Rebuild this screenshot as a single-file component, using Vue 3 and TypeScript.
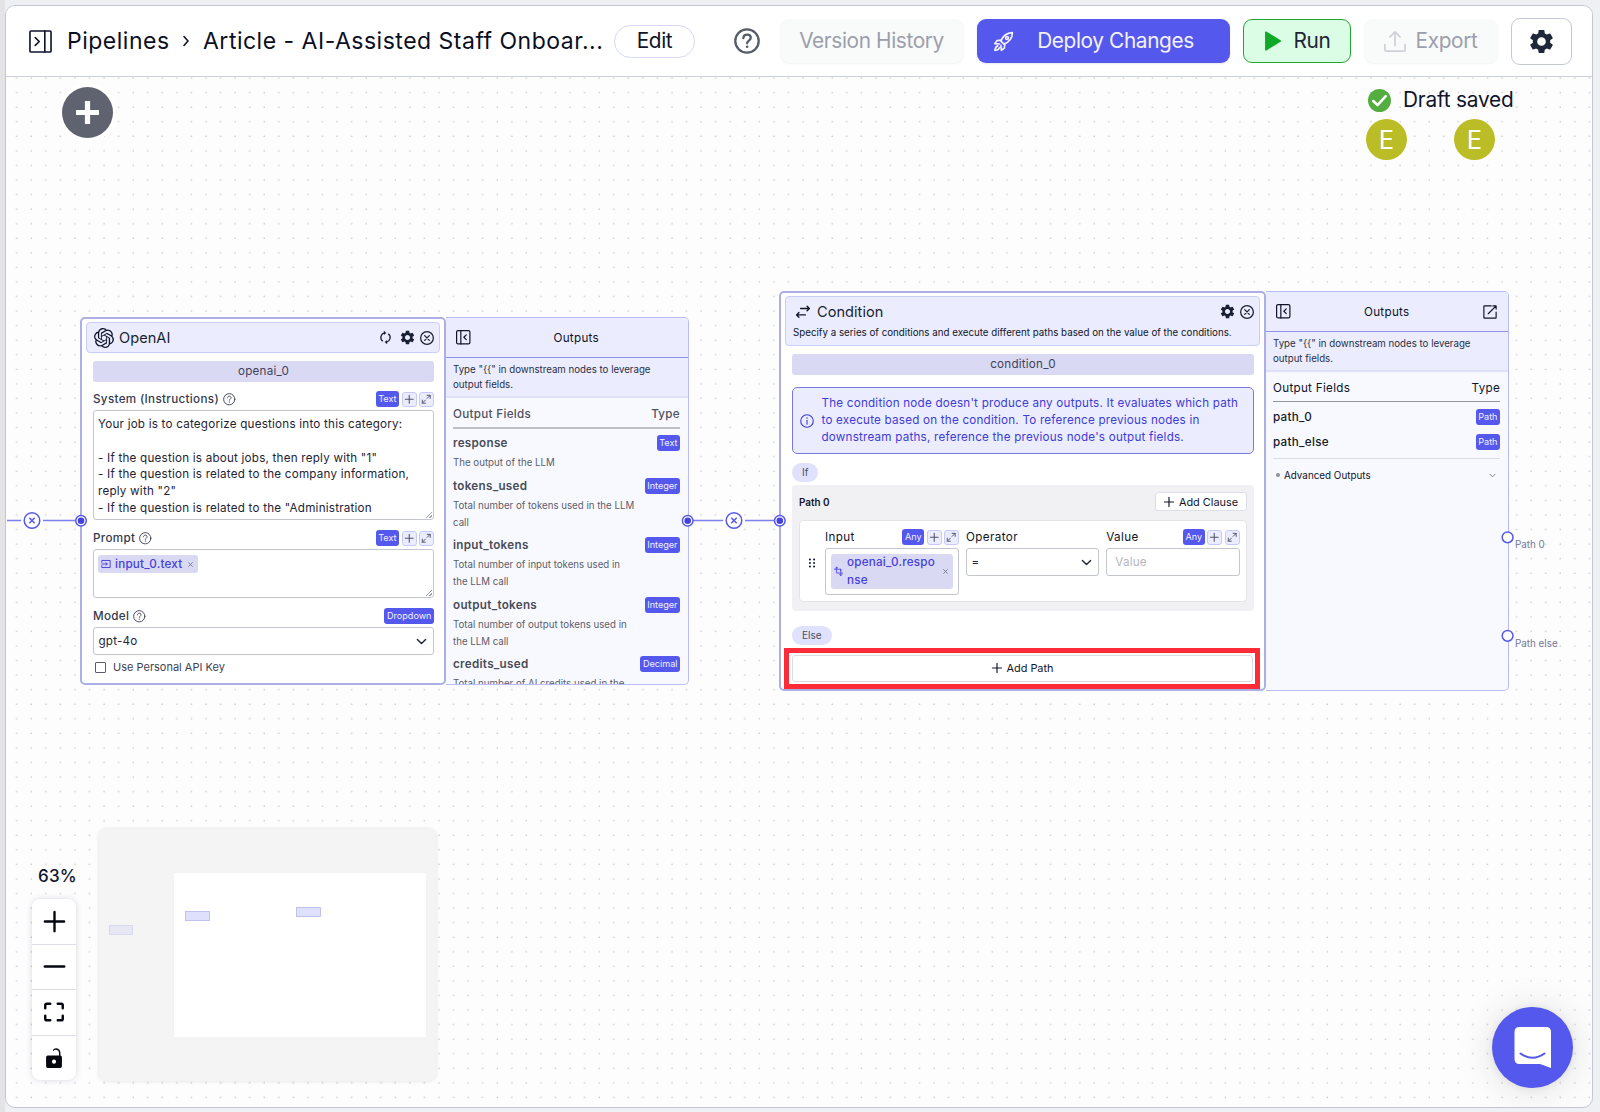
<script setup lang="ts">
import { h } from 'vue'

const gear =
  '<path fill="currentColor" stroke="none" d="M19.14 12.94c.04-.3.06-.61.06-.94 0-.32-.02-.64-.07-.94l2.03-1.58c.18-.14.23-.41.12-.61l-1.92-3.32c-.12-.22-.37-.29-.59-.22l-2.39.96c-.5-.38-1.03-.7-1.62-.94l-.36-2.54c-.04-.24-.24-.41-.48-.41h-3.84c-.24 0-.43.17-.47.41l-.36 2.54c-.59.24-1.13.57-1.62.94l-2.39-.96c-.22-.08-.47 0-.59.22L2.74 8.87c-.12.21-.08.47.12.61l2.03 1.58c-.05.3-.09.63-.09.94s.02.64.07.94l-2.03 1.58c-.18.14-.23.41-.12.61l1.92 3.32c.12.22.37.29.59.22l2.39-.96c.5.38 1.03.7 1.62.94l.36 2.54c.05.24.24.41.48.41h3.84c.24 0 .44-.17.47-.41l.36-2.54c.59-.24 1.13-.56 1.62-.94l2.39.96c.22.08.47 0 .59-.22l1.92-3.32c.12-.22.07-.47-.12-.61l-2.01-1.58zM12 15.6c-1.98 0-3.6-1.62-3.6-3.6s1.62-3.6 3.6-3.6 3.6 1.62 3.6 3.6-1.62 3.6-3.6 3.6z"/>'

const glyphs: Record<string, string> = {
  gear,
  openai:
    '<path fill="currentColor" stroke="none" d="M22.2819 9.8211a5.9847 5.9847 0 0 0-.5157-4.9108 6.0462 6.0462 0 0 0-6.5098-2.9A6.0651 6.0651 0 0 0 4.9807 4.1818a5.9847 5.9847 0 0 0-3.9977 2.9 6.0462 6.0462 0 0 0 .7427 7.0966 5.98 5.98 0 0 0 .511 4.9107 6.051 6.051 0 0 0 6.5146 2.9001A5.9847 5.9847 0 0 0 13.2599 24a6.0557 6.0557 0 0 0 5.7718-4.2058 5.9894 5.9894 0 0 0 3.9977-2.9001 6.0557 6.0557 0 0 0-.7475-7.0729zm-9.022 12.6081a4.4755 4.4755 0 0 1-2.8764-1.0408l.1419-.0804 4.7783-2.7582a.7948.7948 0 0 0 .3927-.6813v-6.7369l2.02 1.1686a.071.071 0 0 1 .038.052v5.5826a4.504 4.504 0 0 1-4.4945 4.4944zm-9.6607-4.1254a4.4708 4.4708 0 0 1-.5346-3.0137l.142.0852 4.783 2.7582a.7712.7712 0 0 0 .7806 0l5.8428-3.3685v2.3324a.0804.0804 0 0 1-.0332.0615L9.74 19.9502a4.4992 4.4992 0 0 1-6.1408-1.6464zM2.3408 7.8956a4.485 4.485 0 0 1 2.3655-1.9728V11.6a.7664.7664 0 0 0 .3879.6765l5.8144 3.3543-2.0201 1.1685a.0757.0757 0 0 1-.071 0l-4.8303-2.7865A4.504 4.504 0 0 1 2.3408 7.872zm16.5963 3.8558L13.1038 8.364 15.1192 7.2a.0757.0757 0 0 1 .071 0l4.8303 2.7913a4.4944 4.4944 0 0 1-.6765 8.1042v-5.6772a.79.79 0 0 0-.407-.667zm2.0107-3.0231l-.142-.0852-4.7735-2.7818a.7759.7759 0 0 0-.7854 0L9.409 9.2297V6.8974a.0662.0662 0 0 1 .0284-.0615l4.8303-2.7866a4.4992 4.4992 0 0 1 6.6802 4.66zM8.3065 12.863l-2.02-1.1638a.0804.0804 0 0 1-.038-.0567V6.0742a4.4992 4.4992 0 0 1 7.3757-3.4537l-.142.0805L8.704 5.459a.7948.7948 0 0 0-.3927.6813zm1.0976-2.3654l2.602-1.4998 2.6069 1.4998v2.9994l-2.5974 1.4997-2.6067-1.4997Z"/>',
  panelOpen: '<rect x="1" y="1" width="22" height="22" rx="1.2"/><path d="M16.5 1v22M6.5 8l4.2 4-4.2 4"/>',
  panelClose: '<rect x="1" y="1" width="22" height="22" rx="2.5"/><path d="M8 1v22M17 8l-4 4 4 4"/>',
  chevronRight: '<path d="M8 3l8 9-8 9"/>',
  chevronDown: '<path d="M3 7.5l9 9 9-9"/>',
  help: '<circle cx="12" cy="12" r="10.8"/><path d="M8.6 9.3c.2-2.1 1.6-3.2 3.5-3.2 2 0 3.4 1.2 3.4 3 0 2.5-3.4 2.6-3.4 5"/><circle cx="12.1" cy="17.3" r="1.2" fill="currentColor" stroke="none"/>',
  rocket:
    '<path d="M9 11.5C11 6 15.500 2.200 22.200 1.800 22 8.500 18 13 12.500 15z"/><circle cx="16" cy="8" r="1.600"/><path d="M9.500 10.500L4.500 11 2 14.500l5.500.4M13.500 14.500l-.5 5L9.500 22l-.4-5.500M5.500 17c-2.500.6-3 2.500-3.300 5.200 2.700-.2 4.600-.8 5.200-3.200"/>',
  play: '<path fill="currentColor" stroke="none" d="M2.500 1.500Q2.500 0 4 .7L21 11Q22.500 12 21 13L4 23.300Q2.500 24 2.500 22.500z"/>',
  upload: '<path d="M12 17V2M6.500 7.500L12 2l5.500 5.500M1 16v5.500q0 1.500 1.500 1.500h19q1.500 0 1.500-1.500V16"/>',
  check: '<circle cx="12" cy="12" r="12" fill="#54ad3f" stroke="none"/><path d="M5.500 12.500l4.500 4.300 8.500-9.300" stroke="#fff"/>',
  refresh:
    '<path d="M10 3.500A8.500 8.500 0 0 0 6.500 18.300M14 20.500A8.500 8.500 0 0 0 17.500 5.700"/><path fill="currentColor" stroke="none" d="M9 -.5l4.500 4L9 7.500zM15 24.500l-4.500-4L15 16.500z"/>',
  close: '<circle cx="12" cy="12" r="10.900"/><path d="M8 8l8 8M16 8l-8 8"/>',
  cross: '<path d="M3 3l18 18M21 3L3 21"/>',
  plus: '<path d="M12 1v22M1 12h22"/>',
  minus: '<path d="M1 12h22"/>',
  expand: '<path d="M3 14v7h7M14 3h7v7M3 21l7-7M21 3l-7 7"/>',
  swap: '<path d="M8 6h15M19 2L23 6 19 10M16 17H1M5 13L1 17 5 21"/>',
  info: '<circle cx="12" cy="12" r="10.800"/><path d="M12 11v6.500"/><circle cx="12" cy="7" r="1.300" fill="currentColor" stroke="none"/>',
  input: '<path d="M2 8V3.500h20v17H2V16M2 12h13M11.500 8.500L15 12l-3.500 3.500"/>',
  crop: '<path d="M7 1v15h16M1 6h5M10 6h8v7M18 16v7M18 6v4M4 3L7 .5 10 3M15 20l3 3 3-3"/>',
  external: '<path d="M14 1.500H2.500q-1 0-1 1v19q0 1 1 1h19q1 0 1-1V12M17 1.500h5.500V7M22 2L9 15"/>',
  drag: '<g fill="currentColor" stroke="none"><circle cx="7" cy="3.500" r="2.400"/><circle cx="17" cy="3.500" r="2.400"/><circle cx="7" cy="12" r="2.400"/><circle cx="17" cy="12" r="2.400"/><circle cx="7" cy="20.500" r="2.400"/><circle cx="17" cy="20.500" r="2.400"/></g>',
  fit: '<path d="M1.500 7.500V4q0-2 2-2H7.500M16.500 2h4q2 0 2 2v3.500M22.500 16.500v3.500q0 2-2 2h-4M7.500 22H3.500q-2 0-2-2v-3.500"/>',
  unlock:
    '<path fill="currentColor" stroke="none" fill-rule="evenodd" d="M4.500 9H18V5.800Q18 2.500 15 2q-2.500-.3-3.500 1.500L10.500 2.500Q12 0 15 .2q4.600.5 4.700 5.600V9q1.800.2 1.800 2v11q0 2-2 2h-15q-2 0-2-2V11q0-2 2-2zM12 13.800a2.500 2.500 0 1 0 .01 0z"/>',
}

const Icon = (props: { name: string; s: number; w?: number }) =>
  h('svg', {
    viewBox: '0 0 24 24',
    width: props.s,
    height: props.s,
    fill: 'none',
    stroke: 'currentColor',
    'stroke-width': props.w ?? 2,
    'stroke-linecap': 'round',
    'stroke-linejoin': 'round',
    class: 'icon',
    innerHTML: glyphs[props.name],
  })
Icon.props = ['name', 's', 'w']

const Tools = (props: { type: string }) =>
  h('span', { class: 'tools' }, [
    h('b', { class: 'badge' }, props.type),
    h('i', { class: 'mini' }, [h(Icon, { name: 'plus', s: 8.5, w: 3 })]),
    h('i', { class: 'mini' }, [h(Icon, { name: 'expand', s: 10.5, w: 2.2 })]),
  ])
Tools.props = ['type']

const note = 'Type "{{" in downstream nodes to leverage output fields.'
const systemText = `Your job is to categorize questions into this category:

- If the question is about jobs, then reply with "1"
- If the question is related to the company information, reply with "2"
- If the question is related to the "Administration`

const fields = [
  { name: 'response', type: 'Text', text: 'The output of the LLM' },
  { name: 'tokens_used', type: 'Integer', text: 'Total number of tokens used in the LLM call' },
  { name: 'input_tokens', type: 'Integer', text: 'Total number of input tokens used in the LLM call' },
  { name: 'output_tokens', type: 'Integer', text: 'Total number of output tokens used in the LLM call' },
  { name: 'credits_used', type: 'Decimal', text: 'Total number of AI credits used in the' },
]
</script>

<template>
  <div class="page">
    <div class="frame">
      <header class="top">
        <Icon class="panel-ic" name="panelOpen" :s="23" :w="1.7" />
        <span class="crumb c1">Pipelines</span>
        <Icon class="crumb-ic" name="chevronRight" :s="12" :w="3.2" />
        <span class="crumb c2">Article - AI-Assisted Staff Onboar...</span>
        <button class="edit">Edit</button>
        <Icon class="help" name="help" :s="26" :w="2.1" />
        <button class="btn off version">Version History</button>
        <button class="btn deploy"><Icon name="rocket" :s="21" :w="1.9" /><span>Deploy Changes</span></button>
        <button class="btn run"><Icon name="play" :s="20" /><span>Run</span></button>
        <button class="btn off export"><Icon name="upload" :s="22" :w="1.9" /><span>Export</span></button>
        <button class="btn cog"><Icon name="gear" :s="29" /></button>
      </header>

      <main class="canvas">
        <svg class="dots" width="1586" height="1030">
          <defs>
            <pattern id="grid" x="9.500" y="14.400" width="14.562" height="14.562" patternUnits="userSpaceOnUse">
              <circle cx="1.200" cy="1.200" r="0.750" fill="#bfc0c9" />
            </pattern>
          </defs>
          <rect width="1586" height="1030" fill="url(#grid)" />
        </svg>

        <button class="add"><Icon name="plus" :s="25" :w="5" /></button>

        <div class="status">
          <div class="saved"><Icon name="check" :s="23" :w="2.6" /><span>Draft saved</span></div>
          <div class="users"><span class="avatar">E</span><span class="avatar">E</span></div>
        </div>

        <section class="node openai">
          <div class="card">
            <div class="head">
              <Icon name="openai" :s="20" /><span class="title">OpenAI</span>
              <span class="acts">
                <Icon name="refresh" :s="13" :w="2.4" /><Icon name="gear" :s="17" /><Icon name="close" :s="14" :w="2.2" />
              </span>
            </div>
            <div class="body">
              <div class="id">openai_0</div>
              <div class="label l1"><span>System (Instructions)</span><Icon name="help" :s="12.500" :w="1.7" /><Tools type="Text" /></div>
              <div class="area a1">{{ systemText }}<i class="grip"></i></div>
              <div class="label l2"><span>Prompt</span><Icon name="help" :s="12.500" :w="1.7" /><Tools type="Text" /></div>
              <div class="area a2">
                <span class="chip"><Icon name="input" :s="10" :w="2.3" /><span class="chip-t">input_0.text</span><Icon class="x" name="cross" :s="5" :w="4.500" /></span>
                <i class="grip"></i>
              </div>
              <div class="label l3"><span>Model</span><Icon name="help" :s="12.500" :w="1.7" /><span class="tools"><b class="badge">Dropdown</b></span></div>
              <div class="select"><span>gpt-4o</span><Icon name="chevronDown" :s="11" :w="3" /></div>
              <div class="tick"><i></i>Use Personal API Key</div>
            </div>
          </div>
          <aside class="outs soft">
            <div class="outs-head"><Icon name="panelClose" :s="14.500" :w="2" /><span>Outputs</span><i class="gap"></i></div>
            <p class="note">{{ note }}</p>
            <div class="list">
              <div class="cols"><span>Output Fields</span><span>Type</span></div>
              <div v-for="f in fields" :key="f.name" class="field">
                <div class="frow"><span>{{ f.name }}</span><b class="badge">{{ f.type }}</b></div>
                <p>{{ f.text }}</p>
              </div>
            </div>
          </aside>
        </section>

        <section class="node condition">
          <div class="card">
            <div class="head tall">
              <div class="hrow">
                <Icon name="swap" :s="14" :w="2.3" /><span class="title">Condition</span>
                <span class="acts"><Icon name="gear" :s="17" /><Icon name="close" :s="14" :w="2.2" /></span>
              </div>
              <p>Specify a series of conditions and execute different paths based on the value of the conditions.</p>
            </div>
            <div class="body">
              <div class="id">condition_0</div>
              <div class="info">
                <Icon name="info" :s="14" :w="1.9" />
                <p>The condition node doesn't produce any outputs. It evaluates which path to execute based on the condition. To reference previous nodes in downstream paths, reference the previous node's output fields.</p>
              </div>
              <span class="pill p-if">If</span>
              <div class="path">
                <div class="path-top"><b>Path 0</b><button class="clause"><Icon name="plus" :s="10" :w="2.800" /><span>Add Clause</span></button></div>
                <div class="clause-box">
                  <Icon class="drag" name="drag" :s="10" />
                  <div class="col">
                    <div class="clabel"><span>Input</span><Tools type="Any" /></div>
                    <div class="cin">
                      <span class="chip wide"><Icon name="crop" :s="9" :w="2.3" /><span class="chip-t">openai_0.respo<br />nse</span><Icon class="x" name="cross" :s="5" :w="4.500" /></span>
                    </div>
                  </div>
                  <div class="col">
                    <div class="clabel"><span>Operator</span></div>
                    <div class="select"><span>=</span><Icon name="chevronDown" :s="11" :w="3" /></div>
                  </div>
                  <div class="col">
                    <div class="clabel"><span>Value</span><Tools type="Any" /></div>
                    <div class="select ph"><span>Value</span></div>
                  </div>
                </div>
              </div>
              <span class="pill p-else">Else</span>
            </div>
            <div class="mark"><button class="addpath"><Icon name="plus" :s="10" :w="2.800" /><span>Add Path</span></button></div>
          </div>
          <aside class="outs">
            <div class="outs-head"><Icon name="panelClose" :s="14.500" :w="2" /><span>Outputs</span><Icon name="external" :s="14" :w="2" /></div>
            <p class="note">{{ note }}</p>
            <div class="list">
              <div class="cols"><span>Output Fields</span><span>Type</span></div>
              <div class="prow"><span>path_0</span><b class="badge">Path</b></div>
              <div class="prow"><span>path_else</span><b class="badge">Path</b></div>
              <div class="adv"><i></i><span>Advanced Outputs</span><Icon name="chevronDown" :s="7" :w="2.800" /></div>
            </div>
          </aside>
          <span class="port-label pl1">Path 0</span>
          <span class="port-label pl2">Path else</span>
        </section>

        <svg class="edges" width="1586" height="1030" fill="#fff" stroke="#5558ea" stroke-width="1.500">
          <path d="M1 443.500H75M682 443.500H774" stroke="#7c80f0" />
          <g v-for="x in [26, 728]" :key="x">
            <circle :cx="x" cy="443.500" r="11" stroke="none" /><circle :cx="x" cy="443.500" r="7.800" />
            <path :d="`M${x - 2.700} 440.800l5.400 5.400m0-5.400l-5.400 5.400`" />
          </g>
          <g v-for="x in [75, 681.700, 773.800]" :key="x">
            <circle :cx="x" cy="443.800" r="5.300" /><circle :cx="x" cy="443.800" r="3.300" fill="#4541dc" stroke="none" />
          </g>
          <circle cx="1501.600" cy="460.300" r="5.400" /><circle cx="1501.600" cy="558.800" r="5.400" />
        </svg>

        <div class="zoom">63%</div>
        <div class="controls">
          <button><Icon name="plus" :s="21" :w="2.700" /></button>
          <button><Icon name="minus" :s="21" :w="3" /></button>
          <button><Icon name="fit" :s="20" :w="2.900" /></button>
          <button><Icon name="unlock" :s="20" /></button>
        </div>
        <div class="minimap">
          <i class="view"></i><i class="mn m1"></i><i class="mn m2"></i><i class="mn m3"></i>
        </div>
        <button class="chat">
          <svg width="37" height="41" viewBox="0 0 37 41">
            <path fill="#fff" d="M5.500 0h26.500q5 0 5 5v36L26 37H5.500q-5 0-5-5V5q0-5 5-5z" />
            <path d="M6.500 26.500q12 8.500 24 0" fill="none" stroke="#5558ea" stroke-width="2" stroke-linecap="round" />
          </svg>
        </button>
      </main>
    </div>
  </div>
</template>

<style>
body {
  background: #eff0f3;
}
.icon {
  flex: none;
  display: block;
  overflow: visible;
}
.tools {
  display: flex;
  gap: 2.500px;
  margin-left: auto;
  align-items: center;
}
.badge {
  height: 16px;
  line-height: 15.500px;
  padding: 0 2.500px;
  border-radius: 3px;
  background: #5558ec;
  color: #f0f0ff;
  font-size: 9.100px;
  font-weight: 400;
  letter-spacing: 0;
}
.mini {
  width: 15px;
  height: 15px;
  box-sizing: border-box;
  border: 1px solid #c6cafa;
  border-radius: 3px;
  background: #ebedfe;
  color: #51556a;
  display: flex;
  align-items: center;
  justify-content: center;
}
</style>

<style scoped>
.page {
  width: 1600px;
  height: 1112px;
  box-sizing: border-box;
  padding: 5px 7px 4px 5px;
  background: linear-gradient(90deg, #e4e4e7 5px, #eff0f3 5px);
  font-family: Inter, 'Liberation Sans', sans-serif;
  color: #10142a;
  overflow: hidden;
}
button {
  font: inherit;
  color: inherit;
  letter-spacing: inherit;
  padding: 0;
  box-sizing: border-box;
}
p {
  margin: 0;
}
.frame {
  height: 1103px;
  box-sizing: border-box;
  border: 1.500px solid #c4c7d2;
  border-radius: 10px;
  background: #fdfdfe;
  overflow: hidden;
}
.top {
  height: 71px;
  box-sizing: border-box;
  border-bottom: 1px solid #ccd0da;
  display: flex;
  align-items: center;
  padding-left: 23px;
  background: #fff;
  font-size: 20.800px;
  letter-spacing: -0.370px;
  white-space: nowrap;
}
.crumb {
  font-size: 23px;
  letter-spacing: 0.500px;
  color: #0b0f1f;
}
.c1 {
  margin-left: 15px;
  width: 102px;
}
.crumb-ic {
  margin-left: 11px;
}
.c2 {
  margin-left: 11px;
  width: 398px;
}
.edit {
  margin-left: 13px;
  width: 81px;
  height: 33px;
  border: 1.500px solid #d5d8fb;
  border-radius: 17px;
  background: #fff;
  padding-bottom: 1px;
}
.help {
  margin-left: 38.500px;
  color: #565b69;
}
.btn {
  height: 44px;
  border-radius: 9px;
  border: 1px solid transparent;
  display: flex;
  align-items: center;
  justify-content: center;
}
.btn span,
.version {
  padding-bottom: 2px;
}
.off {
  background: #f9fafa;
  color: #9b9fac;
  box-shadow: 0 1px 2px rgba(0, 0, 0, 0.05);
}
.version {
  margin-left: 20px;
  width: 184px;
}
.deploy {
  margin-left: 13px;
  width: 253px;
  padding-right: 19px;
  background: #5558ec;
  color: #f2f2ff;
  gap: 23px;
  box-shadow: 0 1px 2px rgba(0, 0, 0, 0.1);
}
.run {
  margin-left: 13px;
  width: 108px;
  background: #dbfce5;
  border-color: #1fa832;
  color: #1d2536;
  gap: 11px;
}
.run svg {
  color: #0da927;
}
.export {
  margin-left: 13px;
  width: 134px;
  gap: 10px;
}
.export svg {
  color: #cfd1d8;
}
.cog {
  margin-left: 13px;
  width: 61px;
  height: 47px;
  background: #fff;
  border: 1.500px solid #c3c7d1;
  color: #1f2839;
}
.canvas {
  position: relative;
  height: 1030px;
}
.dots,
.edges {
  position: absolute;
  left: 0;
  top: 0;
  pointer-events: none;
}
.add {
  position: absolute;
  left: 56px;
  top: 10px;
  width: 51px;
  height: 51px;
  border: 0;
  border-radius: 50%;
  background: #5f636f;
  color: #fff;
  display: flex;
  align-items: center;
  justify-content: center;
  box-shadow: 0 0 0 4px #fff;
}
.add svg {
  stroke-linecap: butt;
}
.status {
  position: absolute;
  left: 1360px;
  top: 11px;
}
.saved {
  display: flex;
  align-items: center;
  height: 24px;
  padding-left: 2px;
  gap: 12px;
  font-size: 20.800px;
  letter-spacing: -0.200px;
}
.saved span {
  padding-bottom: 2px;
}
.users {
  display: flex;
  gap: 47px;
  margin-top: 7px;
}
.avatar {
  width: 41px;
  height: 41px;
  border-radius: 50%;
  background: #bbbd27;
  color: #fff;
  font-size: 25.500px;
  line-height: 41px;
  text-align: center;
}
.node {
  position: absolute;
  display: flex;
  align-items: stretch;
  font-size: 11.650px;
  letter-spacing: 0.220px;
}
.openai {
  left: 74px;
  top: 240px;
  height: 368px;
}
.condition {
  left: 773px;
  top: 214px;
  height: 400px;
}
.card {
  width: 366px;
  box-sizing: border-box;
  border: 2px solid #abafe6;
  border-radius: 5px;
  background: #fff;
  position: relative;
}
.condition .card {
  width: 487px;
}
.head {
  margin: 3px 4px 0 4px;
  height: 31px;
  box-sizing: border-box;
  border: 1px solid #c9cdf9;
  border-radius: 4px;
  background: #ebedfe;
  display: flex;
  align-items: center;
  padding: 0 5px 0 7px;
}
.title {
  margin-left: 5px;
  font-size: 14.560px;
  letter-spacing: 0.050px;
  color: #1a1f31;
}
.acts {
  margin-left: auto;
  display: flex;
  align-items: center;
  gap: 4.500px;
  color: #1a2033;
}
.openai .acts svg:first-child {
  margin-right: 2px;
}
.tall {
  display: block;
  height: 50px;
}
.hrow {
  height: 29px;
  display: flex;
  align-items: center;
  margin-left: 3px;
}
.hrow .title {
  margin-left: 7px;
}
.tall p {
  font-size: 9.750px;
  letter-spacing: 0;
  line-height: 14px;
  white-space: nowrap;
}
.body {
  padding: 0 10px 0 11px;
}
.id {
  margin-top: 8px;
  height: 21px;
  line-height: 21px;
  border-radius: 3px;
  background: #dad9f3;
  color: #40435a;
  text-align: center;
}
.label {
  display: flex;
  align-items: center;
  height: 16px;
  font-weight: 500;
  letter-spacing: 0.330px;
  color: #353a4c;
}
.label > svg {
  margin-left: 4px;
}
.l1 {
  margin-top: 9px;
}
.area {
  box-sizing: border-box;
  border: 1px solid #c3c5cf;
  border-radius: 3px;
  padding: 5px 5px 5px 4px;
  line-height: 16.800px;
  white-space: pre-wrap;
  position: relative;
  color: #1f2436;
}
.a1 {
  margin-top: 3px;
  height: 110px;
}
.l2 {
  margin-top: 10px;
}
.a2 {
  margin-top: 3px;
  height: 49px;
  white-space: normal;
}
.l3 {
  margin-top: 10px;
}
.grip {
  position: absolute;
  right: 1px;
  bottom: 1px;
  width: 6px;
  height: 6px;
  background: linear-gradient(135deg, transparent 48%, #9a9da8 48% 58%, transparent 58% 74%, #9a9da8 74% 84%, transparent 84%);
}
.chip {
  display: inline-flex;
  align-items: center;
  height: 18px;
  padding: 0 5px 0 3px;
  border-radius: 3px;
  background: #dad9f3;
  color: #4541dc;
  font-weight: 500;
}
.chip-t {
  margin: 0 6px 0 4px;
}
.x {
  color: #777a90;
}
.select {
  margin-top: 3px;
  height: 28px;
  box-sizing: border-box;
  border: 1px solid #c3c5cf;
  border-radius: 3px;
  display: flex;
  align-items: center;
  justify-content: space-between;
  padding: 0 6px 0 4.500px;
  color: #1f2436;
}
.tick {
  display: flex;
  align-items: center;
  height: 16px;
  margin-top: 4px;
  font-size: 11px;
  letter-spacing: 0;
  color: #3e4253;
}
.tick i {
  width: 9px;
  height: 9px;
  border: 1px solid #5b5e6c;
  border-radius: 1px;
  margin: 0 7px 0 2px;
}
.outs {
  width: 243px;
  box-sizing: border-box;
  border: 1px solid #b9bdf6;
  border-left: 0;
  border-radius: 0 5px 5px 0;
  background: #f8f9fe;
  overflow: hidden;
  letter-spacing: 0.300px;
}
.outs-head {
  height: 40px;
  box-sizing: border-box;
  border-bottom: 1px solid #8f91ec;
  background: #ebedfe;
  display: flex;
  align-items: center;
  justify-content: space-between;
  padding: 0 11px 0 10px;
}
.soft .outs-head span {
  margin-left: 19px;
}
.gap {
  width: 14px;
}
.note {
  height: 40px;
  box-sizing: border-box;
  padding: 4px 20px 0 7px;
  border-bottom: 2px solid #dfe1fb;
  background: #ebedfe;
  font-size: 9.700px;
  letter-spacing: 0;
  line-height: 15.300px;
  color: #2a2f42;
}
.list {
  padding: 0 8px 0 7px;
}
.cols {
  display: flex;
  justify-content: space-between;
  align-items: center;
  height: 30px;
  box-sizing: border-box;
  padding-top: 2px;
  border-bottom: 1px solid #92949e;
}
.soft .cols {
  height: 31px;
  padding-top: 3px;
  border-bottom: 2px solid #c0c1c8;
  margin-bottom: 6px;
  font-weight: 500;
  color: #50535f;
}
.field {
  padding-bottom: 6.550px;
}
.field p {
  margin-top: 3px;
  font-size: 9.700px;
  letter-spacing: 0;
  line-height: 17px;
  width: 184px;
  color: #5b5e6b;
}
.frow,
.prow {
  height: 16px;
  display: flex;
  align-items: center;
  justify-content: space-between;
  font-weight: 600;
  color: #484b58;
}
.prow {
  margin-top: 8.500px;
  font-weight: 500;
  color: #14182a;
}
.cols + .prow {
  margin-top: 7px;
}
.adv {
  margin-top: 8px;
  height: 33px;
  border-top: 1px solid #dcdde4;
  display: flex;
  align-items: center;
  font-size: 9.850px;
  letter-spacing: 0;
  padding: 0 4px 0 3px;
}
.adv i {
  width: 4px;
  height: 4px;
  border-radius: 50%;
  background: #8e909c;
  margin-right: 4px;
}
.adv svg {
  margin-left: auto;
  color: #6c6f7c;
}
.info {
  margin-top: 12px;
  height: 67px;
  box-sizing: border-box;
  border: 1px solid #7779e6;
  border-radius: 5px;
  background: #ebedfe;
  color: #3f3bd8;
  display: flex;
  align-items: center;
  padding-left: 7px;
  line-height: 16.800px;
}
.info p {
  margin-left: 7.500px;
  width: 425px;
}
.pill {
  display: block;
  width: max-content;
  height: 19px;
  line-height: 18px;
  border-radius: 10px;
  background: #dfe1fd;
  color: #4b4e60;
  font-size: 10px;
  letter-spacing: 0;
  padding: 0 10px;
}
.p-if {
  margin-top: 9px;
}
.path {
  margin-top: 3px;
  height: 126px;
  box-sizing: border-box;
  border-radius: 4px;
  background: #f1f1f3;
  padding: 7px 7px 0;
}
.path-top {
  height: 19px;
  display: flex;
  justify-content: space-between;
  align-items: center;
}
.path-top b {
  font-size: 9.900px;
  letter-spacing: 0;
  font-weight: 600;
}
.clause {
  width: 92px;
  height: 19px;
  border: 1px solid #dcdee8;
  border-radius: 3px;
  background: #fff;
  display: flex;
  align-items: center;
  justify-content: center;
  gap: 5px;
  font-size: 10.900px;
  letter-spacing: 0;
}
.clause-box {
  margin-top: 9px;
  height: 82px;
  box-sizing: border-box;
  border: 1px solid #e4e4e8;
  border-radius: 4px;
  background: #fff;
  display: flex;
  gap: 7px;
  padding: 8px 6.500px 0 7px;
}
.drag {
  margin: 29px 1px 0 0;
}
.col {
  flex: 1;
}
.clabel {
  height: 16px;
  display: flex;
  align-items: center;
  letter-spacing: 0.400px;
}
.cin {
  margin-top: 3px;
  height: 47px;
  box-sizing: border-box;
  border: 1px solid #c3c5cf;
  border-radius: 3px;
  padding: 5px;
}
.wide {
  height: 35px;
  width: 122px;
  box-sizing: border-box;
  line-height: 17.500px;
}
.wide .x {
  margin-left: auto;
}
.ph span {
  color: #b4b6c0;
  margin-left: 3.500px;
}
.p-else {
  margin-top: 15px;
}
.mark {
  position: absolute;
  left: 3px;
  top: 355px;
  width: 476px;
  height: 41px;
  box-sizing: border-box;
  border: 5px solid #fb2c38;
  background: #fff;
  padding: 2px 2px 2px 3px;
}
.addpath {
  width: 100%;
  height: 27px;
  border: 1px solid #dadce4;
  border-radius: 3px;
  background: #fff;
  display: flex;
  align-items: center;
  justify-content: center;
  gap: 5px;
  font-size: 10.900px;
  letter-spacing: 0;
  padding-bottom: 1px;
}
.port-label {
  position: absolute;
  left: 736px;
  font-size: 9.850px;
  letter-spacing: 0;
  line-height: 14px;
  color: #73789a;
  white-space: nowrap;
}
.pl1 {
  top: 246px;
}
.pl2 {
  top: 345px;
}
.zoom {
  position: absolute;
  left: 32px;
  top: 788px;
  font-size: 17px;
  letter-spacing: 0.200px;
  line-height: 22px;
  font-weight: 500;
}
.controls {
  position: absolute;
  left: 26px;
  top: 822px;
  width: 44px;
  height: 181px;
  border-radius: 8px;
  background: #fff;
  box-shadow: 0 0 6px rgba(30, 30, 70, 0.16);
  display: flex;
  flex-direction: column;
  color: #05070f;
}
.controls button {
  flex: 1;
  border: 0;
  border-bottom: 1px solid #dcdde6;
  background: none;
  display: flex;
  align-items: center;
  justify-content: center;
}
.controls button:last-child {
  border-bottom: 0;
}
.minimap {
  position: absolute;
  left: 93px;
  top: 752px;
  width: 337px;
  height: 252px;
  border-radius: 8px;
  background: #f4f4f4;
  box-shadow: 0 0 4px rgba(0, 0, 0, 0.12);
}
.view,
.mn {
  position: absolute;
}
.view {
  left: 75px;
  top: 44px;
  width: 252px;
  height: 164px;
  background: #fff;
}
.mn {
  width: 23px;
  height: 8px;
  border: 1px solid #c0c1f2;
  background: #dfe0fc;
}
.m1 {
  left: 86px;
  top: 82px;
}
.m2 {
  left: 197px;
  top: 78px;
}
.m3 {
  left: 10px;
  top: 96px;
  width: 22px;
  height: 8px;
  border-color: #d8d8f2;
  background: #e6e7f3;
}
.chat {
  position: absolute;
  left: 1486px;
  top: 930px;
  width: 81px;
  height: 81px;
  border: 0;
  border-radius: 50%;
  background: #5558ec;
  display: flex;
  align-items: center;
  justify-content: center;
  box-shadow: 0 1px 8px rgba(0, 0, 0, 0.08), 0 2px 40px rgba(0, 0, 0, 0.12);
}
</style>
